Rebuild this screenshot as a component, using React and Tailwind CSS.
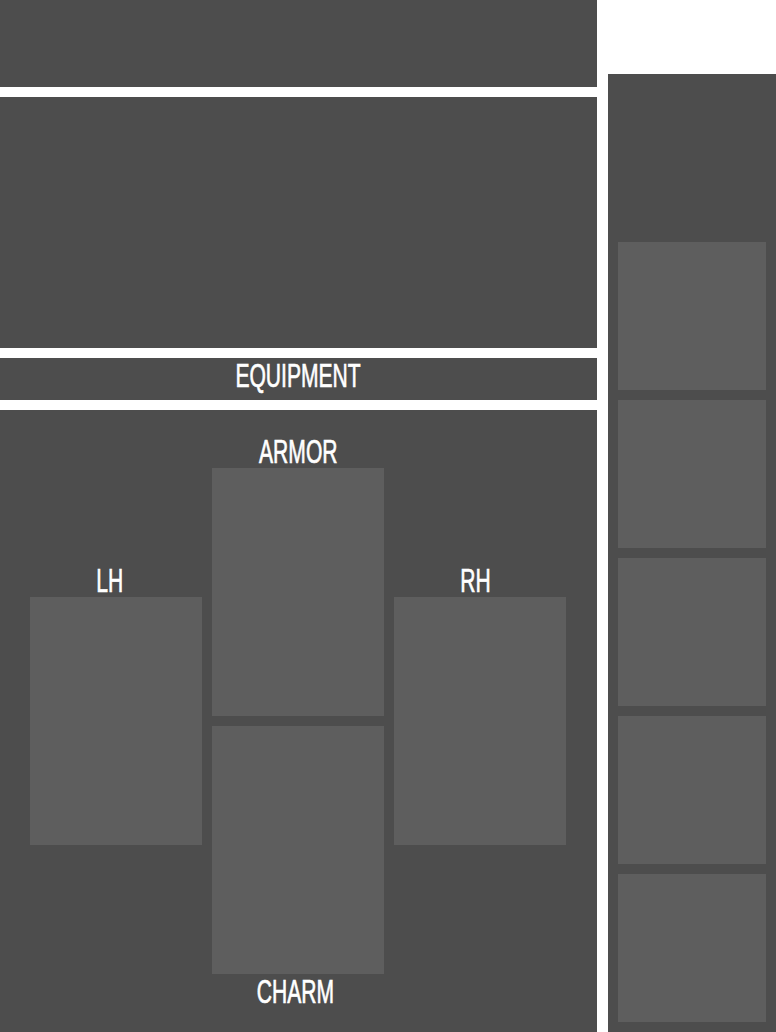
import React from "react";

const font = { fontFamily: '"Liberation Sans", Arial, sans-serif' };

function Label({ children, className = "" }) {
  return (
    <div className={`h-[30px] flex justify-center text-white text-[34px] font-normal leading-[28px] [-webkit-text-stroke:0.7px_white] ${className}`} style={font}>
      <span className="inline-block scale-x-[0.62]">{children}</span>
    </div>
  );
}

function Slot({ className = "" }) {
  return <div className={`bg-[#5e5e5e] ${className}`} />;
}

export default function App() {
  return (
    <div className="flex h-[1032px] w-[776px] overflow-hidden bg-white">
      <div className="flex w-[597px] flex-col gap-[10px]">
        <div className="h-[87px] bg-[#4d4d4d]" />
        <div className="h-[251px] bg-[#4d4d4d]" />
        <div className="h-[42px] bg-[#4d4d4d] pt-[3px]">
          <Label>EQUIPMENT</Label>
        </div>
        <div className="flex flex-1 items-start gap-[10px] bg-[#4d4d4d] px-[30px]">
          <div className="flex w-[172px] flex-col pt-[156px]">
            <Label className="mb-px pr-[12px]">LH</Label>
            <Slot className="h-[248px]" />
          </div>
          <div className="flex w-[172px] flex-col pt-[27px]">
            <Label className="mb-px">ARMOR</Label>
            <Slot className="h-[248px]" />
            <Slot className="mt-[10px] h-[248px]" />
            <Label className="mt-[3px] pr-[6px]">CHARM</Label>
          </div>
          <div className="flex w-[172px] flex-col pt-[156px]">
            <Label className="mb-px pr-[8px]">RH</Label>
            <Slot className="h-[248px]" />
          </div>
        </div>
      </div>
      <div className="ml-[11px] mt-[74px] flex w-[168px] flex-col gap-[10px] bg-[#4d4d4d] px-[10px] pb-[10px] pt-[168px]">
        <Slot className="h-[148px]" />
        <Slot className="h-[148px]" />
        <Slot className="h-[148px]" />
        <Slot className="h-[148px]" />
        <Slot className="h-[148px]" />
      </div>
    </div>
  );
}
